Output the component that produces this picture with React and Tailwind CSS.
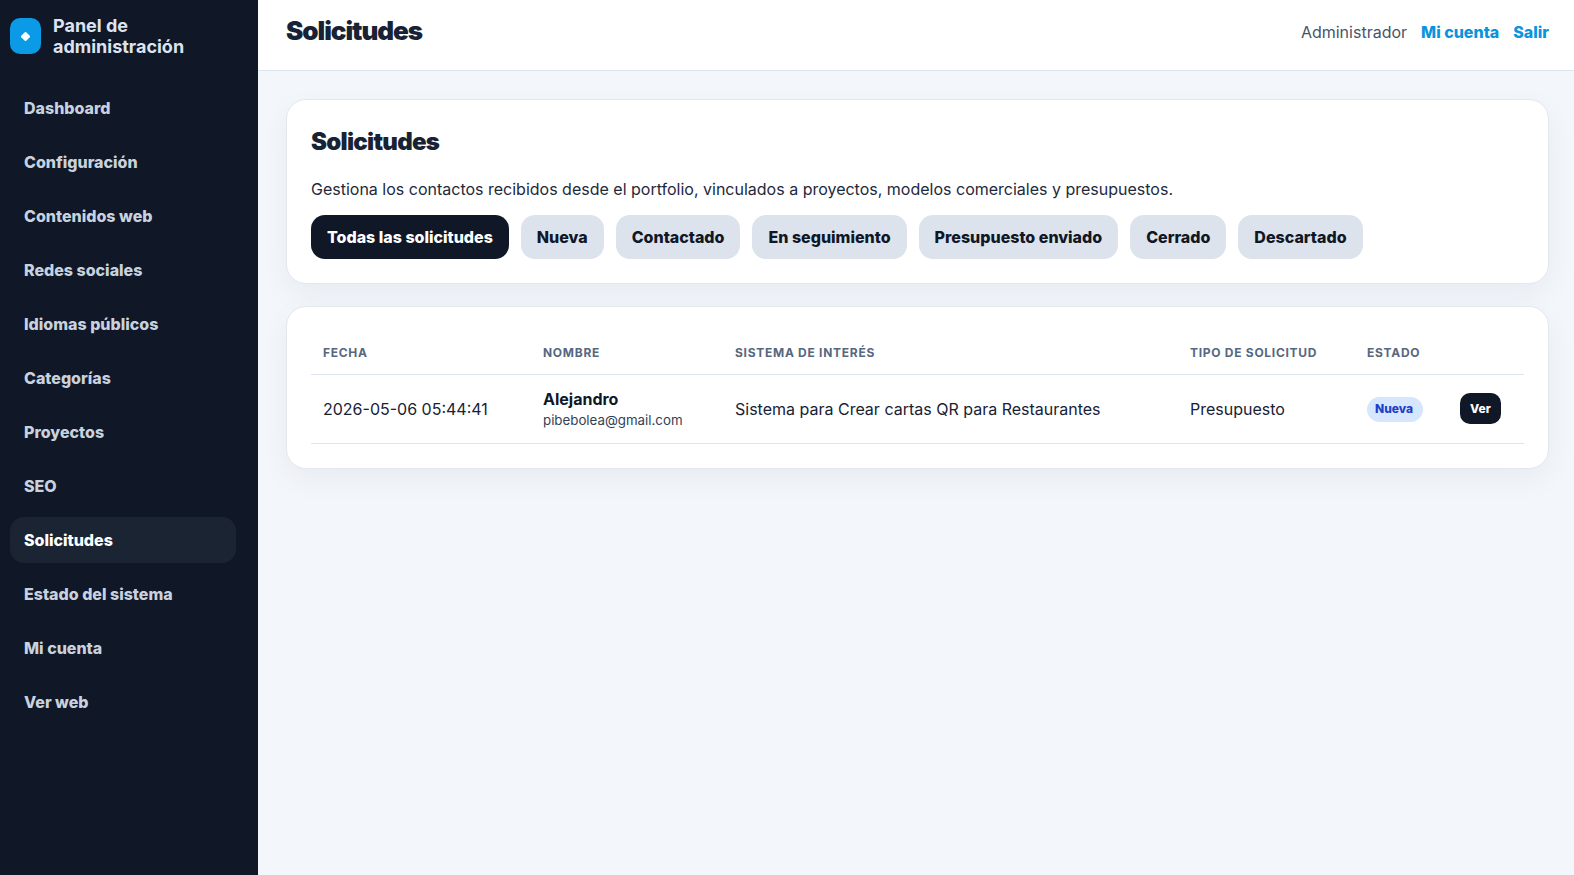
import React from "react";

const navItems = [
  "Dashboard",
  "Configuración",
  "Contenidos web",
  "Redes sociales",
  "Idiomas públicos",
  "Categorías",
  "Proyectos",
  "SEO",
  "Solicitudes",
  "Estado del sistema",
  "Mi cuenta",
  "Ver web",
];

const filters = [
  "Todas las solicitudes",
  "Nueva",
  "Contactado",
  "En seguimiento",
  "Presupuesto enviado",
  "Cerrado",
  "Descartado",
];

const Sidebar = () => (
  <aside className="w-[258px] shrink-0 bg-[#101727] pl-[10px] pr-[22px] pt-[15px]">
    <div className="flex items-center gap-3">
      <div className="flex h-[36px] w-[31px] items-center justify-center rounded-[10px] bg-[#0a9ae6]">
        <div className="h-[7px] w-[7px] rotate-45 rounded-[1px] bg-white"></div>
      </div>
      <div className="text-[18px] font-bold leading-[21px] text-[#dbe4f0]">
        Panel de
        <br />
        administración
      </div>
    </div>
    <nav className="mt-[28px] flex flex-col gap-2">
      {navItems.map((item) => (
        <a
          key={item}
          className={
            item === "Solicitudes"
              ? "flex h-[46px] items-center rounded-[14px] bg-[#1a2433] px-[14px] text-[16px] font-extrabold text-white"
              : "flex h-[46px] items-center rounded-[14px] px-[14px] text-[16px] font-extrabold text-[#c8d2df]"
          }
        >
          {item}
        </a>
      ))}
    </nav>
  </aside>
);

const Header = () => (
  <header className="flex h-[71px] items-center justify-between border-b border-[#dfe5f0] bg-white pb-[6px] pl-[28px] pr-[25px]">
    <h1 className="mb-[4px] text-[26px] font-black tracking-[-0.04em] text-[#182235]">Solicitudes</h1>
    <div className="flex items-center gap-[14px] text-[16px]">
      <span className="text-[#475569]">Administrador</span>
      <a className="font-extrabold text-[#0894de]">Mi cuenta</a>
      <a className="font-extrabold text-[#0894de]">Salir</a>
    </div>
  </header>
);

const RequestsTable = () => (
  <div className="mt-[22px] rounded-[20px] border border-[#e2e8f0] bg-white p-[24px] shadow-[0_10px_30px_rgba(15,23,42,0.05)]">
    <table className="w-full table-fixed border-collapse text-left">
      <colgroup>
        <col className="w-[220px]" />
        <col className="w-[192px]" />
        <col className="w-[455px]" />
        <col className="w-[177px]" />
        <col className="w-[93px]" />
        <col />
      </colgroup>
      <thead>
        <tr className="border-b border-[#dfe5f0] text-[12px] font-bold tracking-[0.06em] text-[#566780]">
          <th className="h-[43px] px-[12px] pt-[2px] font-bold">FECHA</th>
          <th className="px-[12px] pt-[2px] font-bold">NOMBRE</th>
          <th className="px-[12px] pt-[2px] font-bold">SISTEMA DE INTERÉS</th>
          <th className="px-[12px] pt-[2px] font-bold">TIPO DE SOLICITUD</th>
          <th className="px-[12px] pt-[2px] font-bold">ESTADO</th>
          <th className="px-[12px] pt-[2px] font-bold"></th>
        </tr>
      </thead>
      <tbody>
        <tr className="border-b border-[#dfe5f0] text-[16px] text-[#182235]">
          <td className="h-[69px] px-[12px]">2026-05-06 05:44:41</td>
          <td className="px-[12px]">
            <div className="pt-[1px] font-bold leading-[20px] text-[#101727]">Alejandro</div>
            <div className="mt-[1px] text-[13.3px] leading-[20px] text-[#334155]">pibebolea@gmail.com</div>
          </td>
          <td className="px-[12px]">Sistema para Crear cartas QR para Restaurantes</td>
          <td className="px-[12px]">Presupuesto</td>
          <td className="px-[12px]">
            <span className="mb-[1px] inline-block rounded-full bg-[#d6e6fc] pb-[5px] pl-[8px] pr-[10px] pt-[3px] text-[12px] font-extrabold leading-[17px] text-[#1d40c8]">
              Nueva
            </span>
          </td>
          <td className="px-[12px]">
            <button className="h-[31px] rounded-[10px] bg-[#101727] px-[10px] text-[12px] font-extrabold text-white">
              Ver
            </button>
          </td>
        </tr>
      </tbody>
    </table>
  </div>
);

export default function App() {
  return (
    <div className="flex min-h-[875px] bg-[#f3f6fb] font-['Inter',sans-serif]">
      <Sidebar />
      <div className="min-w-0 flex-1">
        <Header />
        <main className="pb-[28px] pl-[28px] pr-[25px] pt-[28px]">
          <div className="rounded-[20px] border border-[#e2e8f0] bg-white p-[24px] shadow-[0_10px_30px_rgba(15,23,42,0.05)]">
            <h2 className="text-[24px] font-black leading-[35px] tracking-[-0.03em] text-[#182235]">Solicitudes</h2>
            <p className="mt-[18px] text-[16px] leading-[24px] text-[#1e293b]">
              Gestiona los contactos recibidos desde el portfolio, vinculados a proyectos, modelos comerciales y presupuestos.
            </p>
            <div className="mt-[14px] flex flex-wrap gap-[12px]">
              {filters.map((f) => (
                <button
                  key={f}
                  className={
                    f === "Todas las solicitudes"
                      ? "h-[44px] rounded-[14px] bg-[#101727] px-[16px] text-[16px] font-extrabold text-white"
                      : "h-[44px] rounded-[14px] bg-[#dde3ed] px-[16px] text-[16px] font-extrabold text-[#101727]"
                  }
                >
                  {f}
                </button>
              ))}
            </div>
          </div>
          <RequestsTable />
        </main>
      </div>
    </div>
  );
}
